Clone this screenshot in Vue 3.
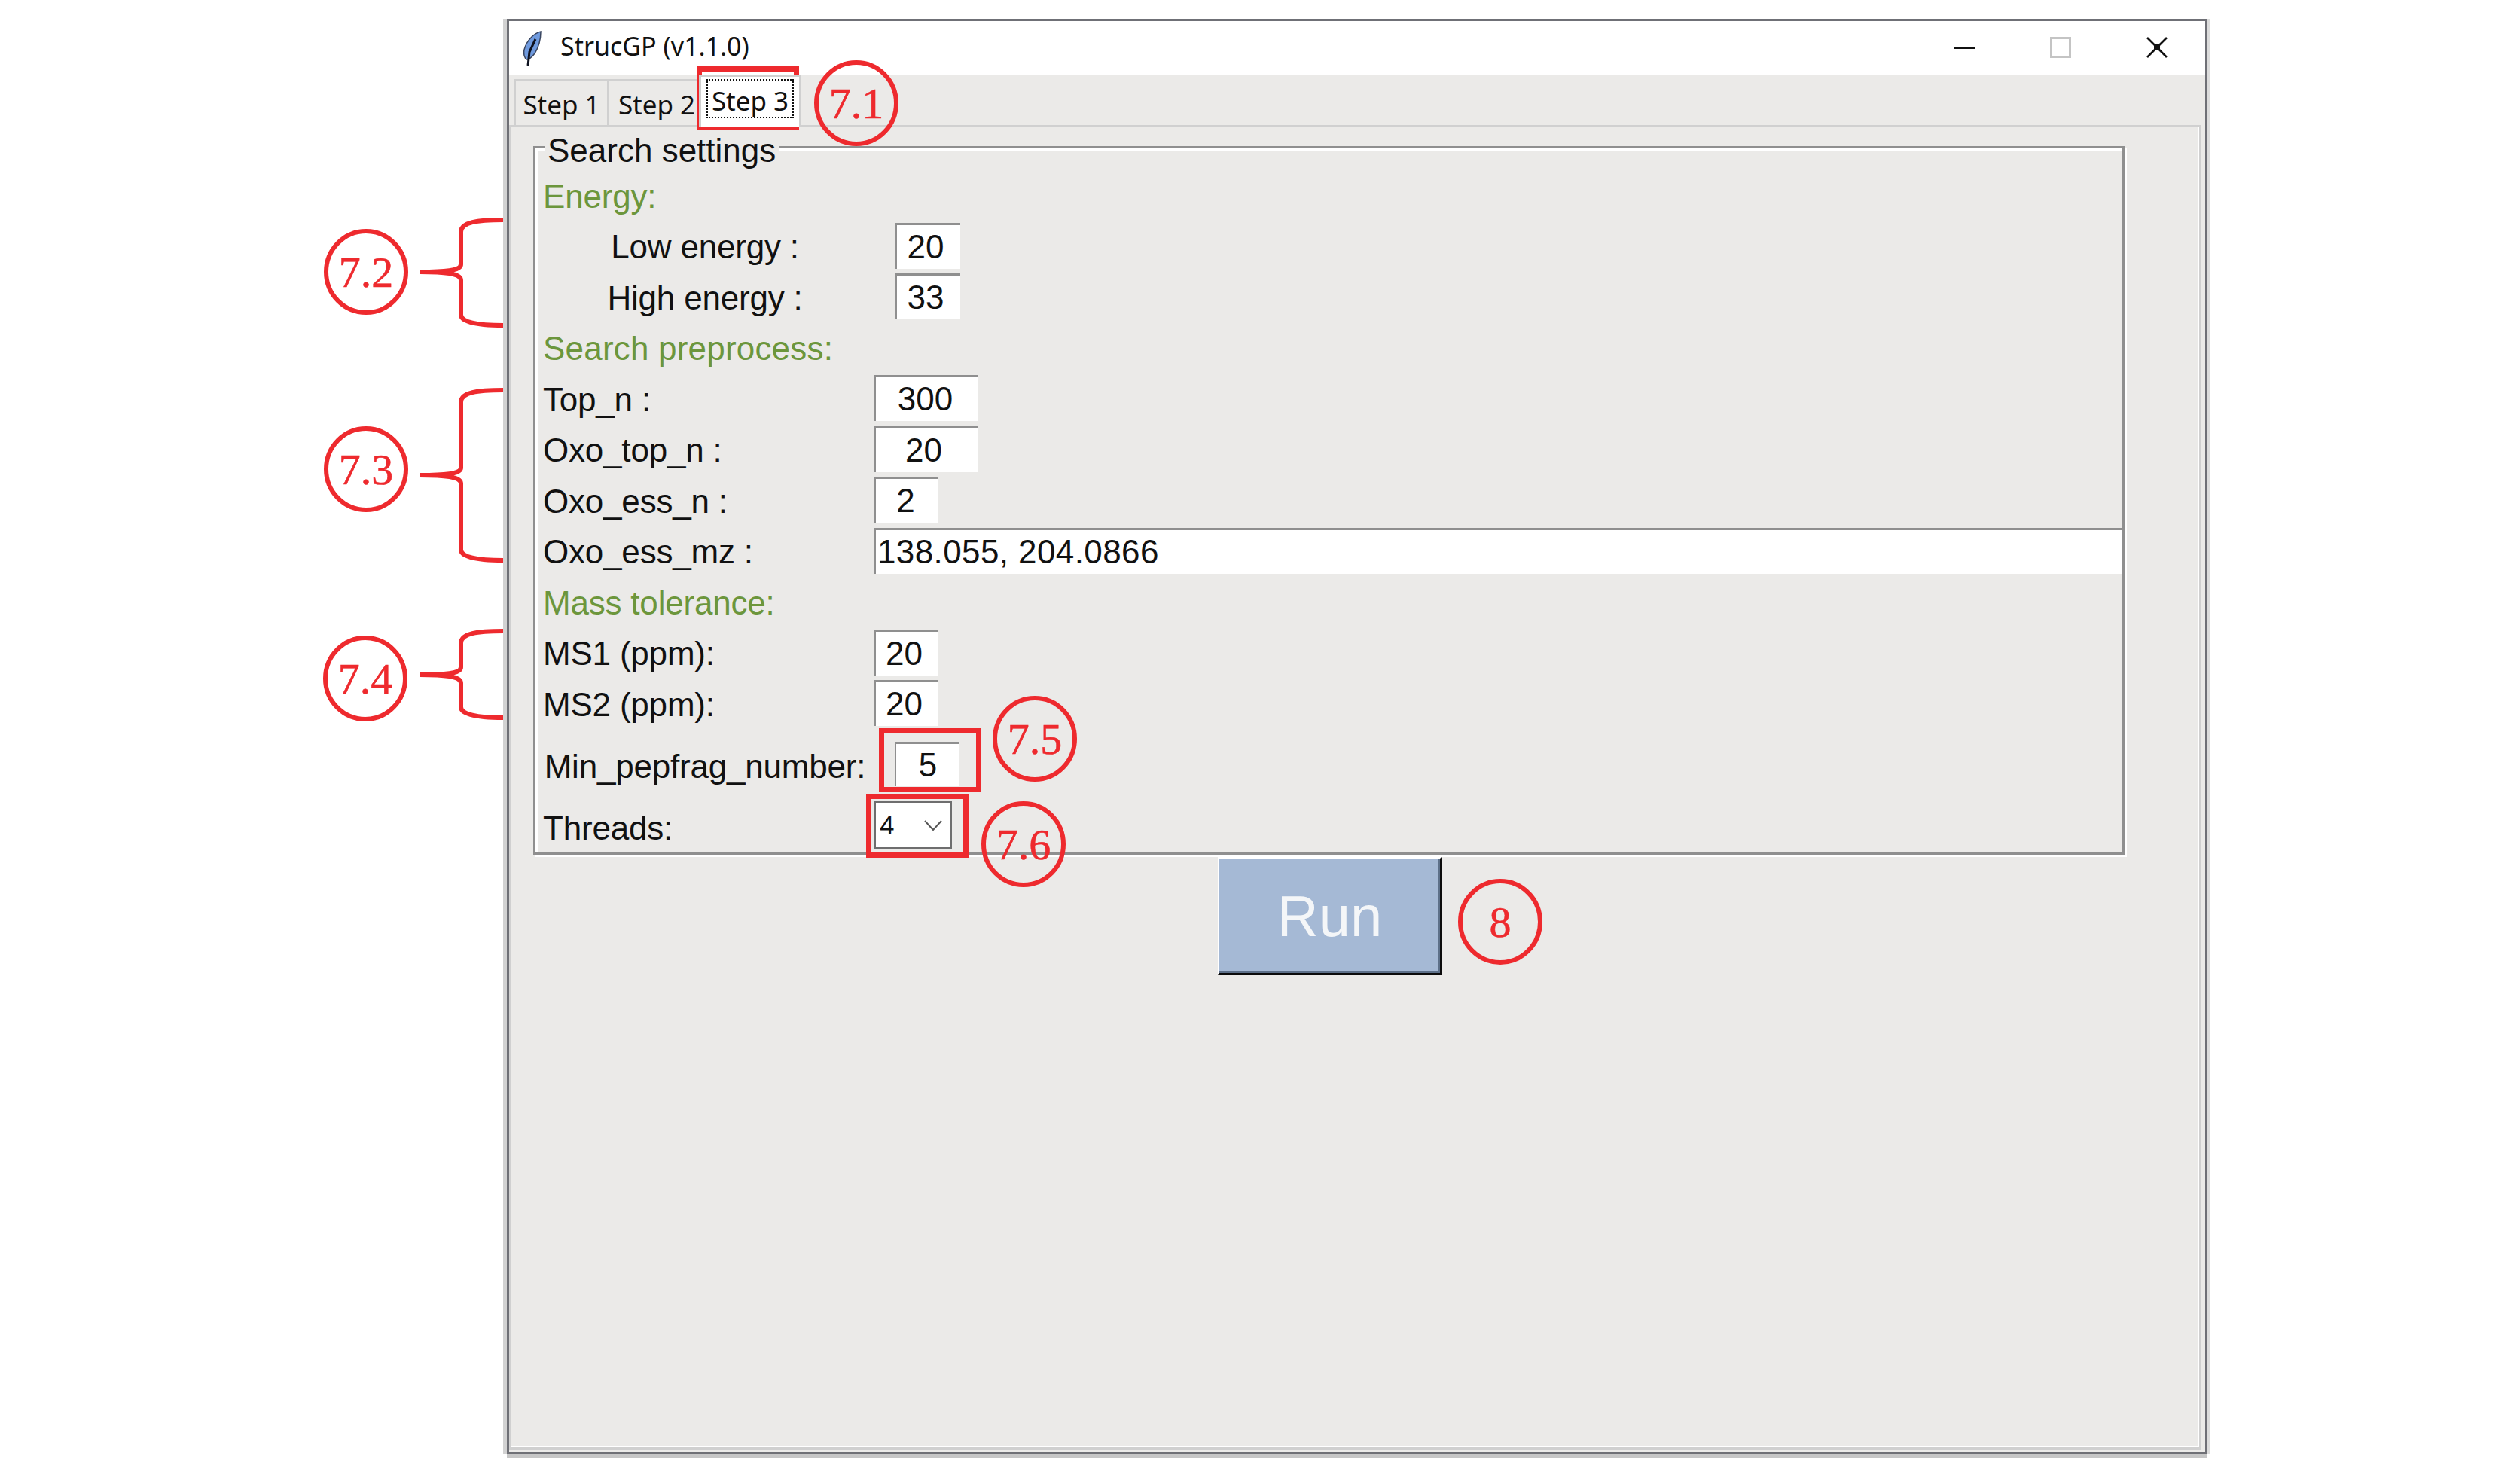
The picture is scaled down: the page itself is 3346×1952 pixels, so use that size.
<script setup>
const circles = [
  { label: '7.1', cx: 1137, cy: 137 },
  { label: '7.2', cx: 486, cy: 361 },
  { label: '7.3', cx: 486, cy: 623 },
  { label: '7.4', cx: 485, cy: 901 },
  { label: '7.5', cx: 1374, cy: 981 },
  { label: '7.6', cx: 1359, cy: 1121 },
  { label: '8', cx: 1992, cy: 1224 }
]
const marks = [
  { x: 928.5, y: 91.5, w: 129, h: 78 },
  { x: 1170.5, y: 970.5, w: 129, h: 78 },
  { x: 1153.5, y: 1057.5, w: 129, h: 78 }
]
function brace(t, m, b) {
  return `M668 ${t} C634 ${t} 612 ${t + 3} 612 ${t + 16} L612 ${m - 10} C612 ${m - 3} 600 ${m} 558 ${m} C600 ${m} 612 ${m + 4} 612 ${m + 11} L612 ${b - 14} C612 ${b - 4} 634 ${b} 668 ${b}`
}
const braces = [brace(292, 361, 432), brace(518, 631, 744), brace(838, 896, 953)]
</script>

<template>
  <div class="page">
    <div class="window">
      <header class="titlebar">
        <svg class="feather" width="26" height="48" viewBox="0 0 26 48">
          <path d="M24 1 C15 3 5 13 2 25 C1 31 2 35 5 38 C9 38 13 34 16 30 C21 22 24 12 24 1 Z" fill="#6f9ade" stroke="#3a4660" stroke-width="1.5" />
          <path d="M17 11 L9 28 L7 46" fill="none" stroke="#0e1220" stroke-width="3" />
        </svg>
        <span class="title">StrucGP (v1.1.0)</span>
        <div class="controls">
          <div class="ctl"><span class="min"></span></div>
          <div class="ctl"><span class="max"></span></div>
          <div class="ctl">
            <svg width="28" height="28" viewBox="0 0 28 28"><path d="M1 1 L27 27 M27 1 L1 27" stroke="#111" stroke-width="2.6" /><rect x="10" y="10" width="8" height="8" fill="#111" /></svg>
          </div>
        </div>
      </header>
      <div class="body">
        <nav class="tabs">
          <div class="tab tab1">Step 1</div>
          <div class="tab tab2">Step 2</div>
          <div class="tab tab3"><span class="focus">Step 3</span></div>
        </nav>
        <section class="notebook">
          <div class="content">
            <div class="group">
              <span class="legend">Search settings</span>
              <div class="row"><span class="green">Energy:</span></div>
              <div class="row"><span class="lab center">Low energy :</span><span class="entry e2 push">20</span></div>
              <div class="row"><span class="lab center">High energy :</span><span class="entry e2 push">33</span></div>
              <div class="row"><span class="green wider">Search preprocess:</span></div>
              <div class="row"><span class="lab">Top_n :</span><span class="entry e3 half">300</span></div>
              <div class="row"><span class="lab">Oxo_top_n :</span><span class="entry e3">20</span></div>
              <div class="row"><span class="lab">Oxo_ess_n :</span><span class="entry e1 half">2</span></div>
              <div class="row"><span class="lab">Oxo_ess_mz :</span><span class="entry wide">138.055, 204.0866</span></div>
              <div class="row"><span class="green">Mass tolerance:</span></div>
              <div class="row"><span class="lab">MS1 (ppm):</span><span class="entry e1">20</span></div>
              <div class="row"><span class="lab">MS2 (ppm):</span><span class="entry e1">20</span></div>
              <div class="row minrow"><span class="lab center">Min_pepfrag_number:</span><span class="entry e2 push2">5</span></div>
              <div class="row thrrow">
                <span class="lab">Threads:</span>
                <span class="combo">
                  <span class="combo-val">4</span>
                  <svg width="24" height="14" viewBox="0 0 24 14"><path d="M1 1 L12 13 L23 1" fill="none" stroke="#555" stroke-width="2" /></svg>
                </span>
              </div>
            </div>
            <button class="run">Run</button>
          </div>
        </section>
      </div>
    </div>
    <svg class="notes" width="3346" height="1952" viewBox="0 0 3346 1952">
      <rect v-for="(m, i) in marks" :key="'m' + i" :x="m.x" :y="m.y" :width="m.w" :height="m.h" fill="none" stroke="#ee2a2e" stroke-width="7" />
      <path v-for="(b, i) in braces" :key="'b' + i" :d="b" fill="none" stroke="#ee2a2e" stroke-width="6" />
      <g v-for="c in circles" :key="c.label">
        <ellipse :cx="c.cx" :cy="c.cy" rx="53" ry="54" fill="none" stroke="#ee2a2e" stroke-width="6" />
        <text :x="c.cx" :y="c.cy + 20" text-anchor="middle" class="num">{{ c.label }}</text>
      </g>
    </svg>
  </div>
</template>

<style>
html, body { margin: 0; background: #fff; }
</style>

<style scoped>
.page {
  position: relative;
  width: 3346px;
  height: 1952px;
  box-sizing: border-box;
  padding: 25px 0 0 673px;
  background: #fff;
  overflow: hidden;
  font-family: "Liberation Sans", Arial, sans-serif;
  color: #111;
}
.window {
  width: 2258px;
  height: 1906px;
  box-sizing: border-box;
  border: 3px solid #6f7076;
  display: flex;
  flex-direction: column;
  box-shadow: 0 5px 0 #c6c6c6, 4px 0 0 #dcdcdc, -5px 0 0 #d2d2d2;
}
.titlebar {
  height: 71px;
  flex: none;
  background: #fff;
  display: flex;
  align-items: center;
}
.feather { margin: 2px 0 0 18px; flex: none; }
.title {
  margin-left: 24px;
  font: 34px "Noto Sans", sans-serif;
  margin-top: -5px;
}
.controls { margin-left: auto; display: flex; }
.ctl {
  width: 128px;
  height: 71px;
  display: flex;
  align-items: center;
  justify-content: center;
}
.ctl svg { margin-top: -1px; }
.min { width: 28px; height: 3px; background: #111; margin-top: -1px; }
.max { width: 22px; height: 22px; border: 3px solid #c4c4c4; margin-top: -1px; }
.body {
  flex: 1;
  min-height: 0;
  background: #ebeae8;
  display: flex;
  flex-direction: column;
}
.tabs {
  height: 67px;
  flex: none;
  display: flex;
  align-items: flex-end;
  padding-left: 6px;
  font: 35px "Noto Sans", sans-serif;
}
.tab {
  box-sizing: border-box;
  border: 3px solid #d0d0d0;
  border-bottom: 0;
  display: flex;
  align-items: center;
  justify-content: center;
}
.tab1 { width: 124px; height: 61px; padding-top: 3px; border-right: 0; }
.tab2 { width: 122px; height: 61px; padding: 3px 0 0 7px; border-right: 0; }
.tab3 {
  width: 136px;
  height: 70px;
  margin-bottom: -3px;
  background: #fff;
  position: relative;
  z-index: 1;
  padding: 3px 0 12px;
}
.focus {
  box-sizing: border-box;
  width: 116px;
  height: 52px;
  border: 2px dotted #111;
  display: flex;
  align-items: center;
  justify-content: center;
  white-space: nowrap;
  padding-top: 4px;
}
.notebook {
  flex: 1;
  margin-right: 6px;
  margin-bottom: 3px;
  box-sizing: border-box;
  border: 3px solid #d0d0d0;
  border-right-width: 2px;
  box-shadow: inset -2px -2px 0 #fff;
}
.content {
  width: 2116px;
  margin: 25px 0 0 29px;
  display: flex;
  flex-direction: column;
  align-items: center;
}
.group {
  position: relative;
  box-sizing: border-box;
  width: 2113px;
  height: 941px;
  align-self: flex-start;
  border: 3px solid #8f8f8f;
  box-shadow: 3px 3px 0 #fff, inset 3px 3px 0 #fff;
  padding: 28px 0 0 10px;
  font-size: 44px;
}
.legend {
  position: absolute;
  left: 12px;
  top: -19px;
  padding: 0 4px;
  height: 44px;
  line-height: 44px;
  background: #ebeae8;
  white-space: nowrap;
}
.row {
  height: 67.5px;
  display: flex;
  align-items: center;
  white-space: nowrap;
}
.minrow { height: 93.5px; }
.thrrow { height: 70.5px; }
.green { color: #6c963c; padding-top: 4px; letter-spacing: -0.2px; }
.wider { letter-spacing: 0.2px; }
.lab { width: 440px; flex: none; padding-top: 4px; letter-spacing: -0.2px; }
.minrow .lab { padding-top: 7px; }
.thrrow .lab { padding-top: 8px; }
.lab.center { width: 430px; text-align: center; }
.entry {
  box-sizing: border-box;
  height: 61px;
  background: #fff;
  border-top: 3px solid #8f8f8f;
  border-left: 2px solid #8f8f8f;
  display: flex;
  align-items: center;
  justify-content: center;
  padding-right: 8px;
}
.half { padding-right: 4px; }
.e1 { width: 85px; }
.e2 { width: 86px; }
.e3 { width: 137px; }
.push { margin-left: 38px; }
.push2 { margin-left: 37px; height: 59px; padding-right: 0; }
.wide {
  width: 1656px;
  justify-content: flex-start;
  padding-left: 2px;
  letter-spacing: 0.4px;
}
.combo {
  box-sizing: border-box;
  width: 104px;
  height: 65px;
  margin-left: -1px;
  margin-top: -1px;
  background: #fff;
  border: 3px solid #6e6e6e;
  display: flex;
  align-items: center;
  justify-content: space-between;
  padding: 0 10px 0 5px;
}
.combo-val { font-size: 35px; }
.run {
  width: 298px;
  height: 158px;
  margin-top: 2px;
  margin-left: 0;
  box-sizing: border-box;
  padding: 0;
  background: #a5b9d5;
  color: #f4f6f8;
  font: 76px "Liberation Sans", sans-serif;
  border-style: solid;
  border-width: 3px 3px 3px 2px;
  border-color: #fff #0c0c0c #0c0c0c #fff;
  box-shadow: inset -3px -3px 0 #5d7089;
}
.notes {
  position: absolute;
  left: 0;
  top: 0;
  pointer-events: none;
}
.num {
  font-family: "Liberation Serif", "Times New Roman", serif;
  font-size: 58px;
  fill: #ee2a2e;
  stroke: #ee2a2e;
  stroke-width: 0.6px;
}
</style>
